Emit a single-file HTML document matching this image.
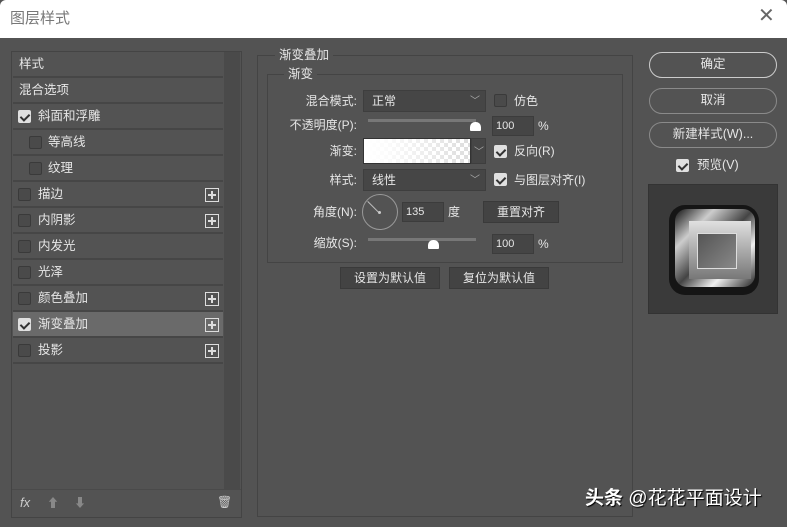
<!DOCTYPE html>
<html><head><meta charset="utf-8"><style>
*{margin:0;padding:0;box-sizing:border-box}
body{width:787px;height:527px;background:#535353;font-family:"Liberation Sans","Noto Sans CJK SC",sans-serif;font-size:12px;line-height:15px;color:#e6e6e6;position:relative;overflow:hidden}
.a{position:absolute}
.title{left:0;top:0;width:787px;height:38px;background:#fff;border-radius:6px 6px 0 0}
.title span{position:absolute;left:10px;top:10px;font-size:15px;line-height:18px;color:#777}
.row{position:absolute;left:13px;width:210px;height:26px;border-bottom:2px solid #464646;background:#535353}
.row span{position:absolute;top:5px;font-size:12.5px}
.cb{position:absolute;width:13px;height:13px;border:1px solid #3a3a3a;background:#4a4a4a;border-radius:2px}
.cb.on{background:#e0e0e0;border-color:#e0e0e0}
.cb.on:after{content:"";position:absolute;left:3px;top:1px;width:4px;height:7px;border:solid #333;border-width:0 2px 2px 0;transform:rotate(45deg)}
.plus{position:absolute;left:192px;top:6px;width:14px;height:14px;border:1px solid #ddd}
.plus:before{content:"";position:absolute;left:2px;top:5px;width:8px;height:2px;background:#ddd}
.plus:after{content:"";position:absolute;left:5px;top:2px;width:2px;height:8px;background:#ddd}
.lbl{position:absolute;text-align:right;width:100px;font-size:12px}
.sel{position:absolute;height:22px;background:#464646;border:1px solid #3e3e3e}
.sel span{position:absolute;left:8px;top:3px}
.sel i{position:absolute;right:5px;top:3px;font-style:normal;color:#aaa;font-size:10px}
.inp{position:absolute;height:20px;background:#454545;border:1px solid #3c3c3c;font-size:11px;padding:2px 0 0 3px}
.btn{position:absolute;height:22px;background:#434343;border:1px solid #3a3a3a;text-align:center;padding-top:3px}
.pill{position:absolute;left:649px;width:128px;height:26px;border:1px solid #8a8a8a;border-radius:13px;text-align:center;padding-top:4px;font-size:12.5px}
</style></head><body>
<div class="a title"><span>图层样式</span><span style="left:758px;top:7px;font-size:20px;color:#666">✕</span></div>

<div class="a" style="left:11px;top:51px;width:231px;height:467px;border:1px solid #444"></div>
<div class="a" style="left:224px;top:52px;width:16px;height:437px;background:#4a4a4a"></div>
<div class="a" style="left:12px;top:489px;width:229px;height:1px;background:#4a4a4a"></div>

<div class="row" style="top:52px"><span style="left:6px">样式</span></div>
<div class="row" style="top:78px"><span style="left:6px">混合选项</span></div>
<div class="row" style="top:104px"><div class="cb on" style="left:5px;top:6px"></div><span style="left:25px">斜面和浮雕</span></div>
<div class="row" style="top:130px"><div class="cb" style="left:16px;top:6px"></div><span style="left:35px">等高线</span></div>
<div class="row" style="top:156px"><div class="cb" style="left:16px;top:6px"></div><span style="left:35px">纹理</span></div>
<div class="row" style="top:182px"><div class="cb" style="left:5px;top:6px"></div><span style="left:25px">描边</span><div class="plus"></div></div>
<div class="row" style="top:208px"><div class="cb" style="left:5px;top:6px"></div><span style="left:25px">内阴影</span><div class="plus"></div></div>
<div class="row" style="top:234px"><div class="cb" style="left:5px;top:6px"></div><span style="left:25px">内发光</span></div>
<div class="row" style="top:260px"><div class="cb" style="left:5px;top:6px"></div><span style="left:25px">光泽</span></div>
<div class="row" style="top:286px"><div class="cb" style="left:5px;top:6px"></div><span style="left:25px">颜色叠加</span><div class="plus"></div></div>
<div class="row" style="top:312px;background:#6a6a6a"><div class="cb on" style="left:5px;top:6px"></div><span style="left:25px">渐变叠加</span><div class="plus"></div></div>
<div class="row" style="top:338px"><div class="cb" style="left:5px;top:6px"></div><span style="left:25px">投影</span><div class="plus"></div></div>

<div class="a" style="left:20px;top:495px;font-style:italic;color:#ccc;font-size:13px">fx</div>
<div class="a" style="left:47px;top:496px;color:#888;font-size:12px">⬆</div>
<div class="a" style="left:74px;top:496px;color:#888;font-size:12px">⬇</div>
<div class="a" style="left:217px;top:495px;color:#ccc;font-size:12px">🗑</div>

<div class="a" style="left:257px;top:55px;width:376px;height:462px;border:1px solid #444"></div>
<div class="a" style="left:275px;top:48px;background:#535353;padding:0 4px;font-size:12.5px">渐变叠加</div>
<div class="a" style="left:267px;top:74px;width:356px;height:189px;border:1px solid #444"></div>
<div class="a" style="left:284px;top:67px;background:#535353;padding:0 4px;font-size:12.5px">渐变</div>

<div class="lbl" style="left:257px;top:94px">混合模式:</div>
<div class="sel" style="left:363px;top:90px;width:123px"><span>正常</span><i>﹀</i></div>
<div class="cb" style="left:494px;top:94px"></div><div class="a" style="left:514px;top:94px">仿色</div>

<div class="lbl" style="left:257px;top:118px">不透明度(P):</div>
<div class="a" style="left:368px;top:119px;width:108px;height:3px;background:#777"></div>
<div class="a" style="left:470px;top:122px;width:11px;height:9px;background:#fff;border-radius:5px 5px 1px 1px"></div>
<div class="inp" style="left:492px;top:116px;width:42px">100</div><div class="a" style="left:538px;top:119px">%</div>

<div class="lbl" style="left:257px;top:144px">渐变:</div>
<div class="a" style="left:363px;top:138px;width:108px;height:26px;border:1px solid #333;background:linear-gradient(90deg,#fff 0%,rgba(255,255,255,.9) 20%,rgba(255,255,255,0) 100%),repeating-conic-gradient(#ddd 0 25%,#fff 0 50%) 0 0/8px 8px"></div>
<div class="a" style="left:471px;top:138px;width:15px;height:26px;background:#464646;border:1px solid #3e3e3e;color:#aaa;font-size:10px;padding:6px 0 0 2px">﹀</div>
<div class="cb on" style="left:494px;top:145px"></div><div class="a" style="left:514px;top:144px">反向(R)</div>

<div class="lbl" style="left:257px;top:173px">样式:</div>
<div class="sel" style="left:363px;top:169px;width:123px"><span>线性</span><i>﹀</i></div>
<div class="cb on" style="left:494px;top:173px"></div><div class="a" style="left:514px;top:173px">与图层对齐(I)</div>

<div class="lbl" style="left:257px;top:205px">角度(N):</div>
<div class="a" style="left:362px;top:194px;width:36px;height:36px;border:1px solid #999;border-radius:50%"></div>
<div class="a" style="left:368px;top:201px;width:15px;height:1px;background:#bbb;transform:rotate(45deg);transform-origin:0 0"></div>
<div class="a" style="left:378px;top:211px;width:3px;height:3px;background:#ccc;border-radius:50%"></div>
<div class="inp" style="left:402px;top:202px;width:42px">135</div><div class="a" style="left:448px;top:205px">度</div>
<div class="btn" style="left:483px;top:201px;width:76px">重置对齐</div>

<div class="lbl" style="left:257px;top:236px">缩放(S):</div>
<div class="a" style="left:368px;top:238px;width:108px;height:3px;background:#777"></div>
<div class="a" style="left:428px;top:240px;width:11px;height:9px;background:#fff;border-radius:5px 5px 1px 1px"></div>
<div class="inp" style="left:492px;top:234px;width:42px">100</div><div class="a" style="left:538px;top:237px">%</div>

<div class="btn" style="left:340px;top:267px;width:100px">设置为默认值</div>
<div class="btn" style="left:449px;top:267px;width:100px">复位为默认值</div>

<div class="pill" style="top:52px;border-color:#ccc">确定</div>
<div class="pill" style="top:88px">取消</div>
<div class="pill" style="top:122px">新建样式(W)...</div>
<div class="cb on" style="left:676px;top:159px"></div><div class="a" style="left:697px;top:158px;font-size:12.5px">预览(V)</div>

<div class="a" style="left:648px;top:184px;width:130px;height:130px;background:#3a3a3a;border:1px solid #333">
 <div class="a" style="left:20px;top:20px;width:90px;height:90px;border-radius:16px;background:#151515"></div>
 <div class="a" style="left:26px;top:24px;width:80px;height:78px;border-radius:12px;background:linear-gradient(135deg,#111 0%,#ccc 25%,#444 50%,#f0f0f0 72%,#222 100%)"></div>
 <div class="a" style="left:40px;top:36px;width:62px;height:58px;background:linear-gradient(180deg,#e0e0e0,#777)"></div>
 <div class="a" style="left:48px;top:48px;width:40px;height:36px;background:linear-gradient(135deg,#555,#888);border:1px solid #ddd"></div>
</div>

<div class="a" style="left:585px;top:488px;font-size:19px;line-height:22px;font-weight:bold;color:#fff;text-shadow:1px 1px 1px #000">头条 <span style="font-weight:normal">@花花平面设计</span></div>
</body></html>
